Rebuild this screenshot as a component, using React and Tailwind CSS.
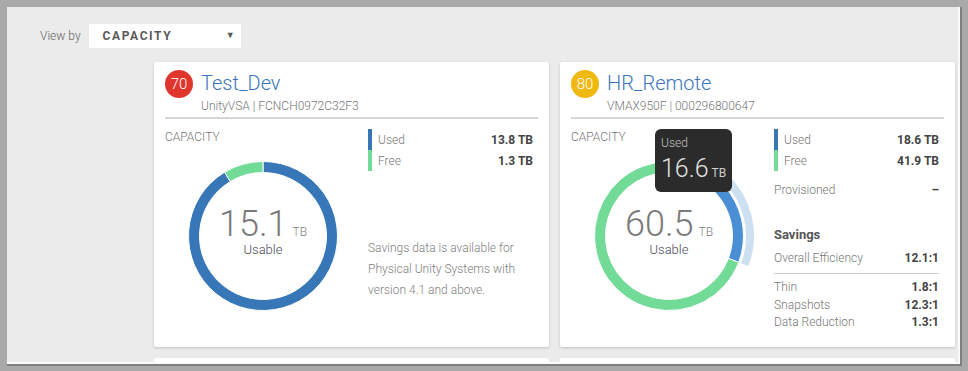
const BLUE = "#3777b8";
const GREEN = "#72db98";

function pt(c, r, a) {
  const rad = (a * Math.PI) / 180;
  return [c + r * Math.sin(rad), c - r * Math.cos(rad)];
}

function segPath(r0, r1, a0, a1) {
  const c = 90;
  const large = a1 - a0 > 180 ? 1 : 0;
  const [x0, y0] = pt(c, r1, a0);
  const [x1, y1] = pt(c, r1, a1);
  const [x2, y2] = pt(c, r0, a1);
  const [x3, y3] = pt(c, r0, a0);
  return `M${x0} ${y0} A${r1} ${r1} 0 ${large} 1 ${x1} ${y1} L${x2} ${y2} A${r0} ${r0} 0 ${large} 0 ${x3} ${y3} Z`;
}

function Donut({ segments, halo, value }) {
  return (
    <div className="relative w-[180px] h-[180px] ml-[8px] mt-[1px]">
      <svg width="180" height="180" viewBox="0 0 180 180">
        {halo && <path d={segPath(77, 85, halo[0], halo[1])} fill="#bcd5ee" opacity="0.75" />}
        {segments.map((s, i) => (
          <path key={i} d={segPath(63.5, 74.5, s.from, s.to)} fill={s.color} stroke="#fff" strokeWidth="1" />
        ))}
      </svg>
      <div className="absolute left-0 top-[64px] w-[180px] flex flex-col items-center">
        <div className="flex items-baseline h-[28px]">
          <span className="text-[36px] leading-[28px] font-light text-[#7a7a7a]">{value}</span>
          <span className="ml-[5px] text-[12px] leading-[12px] font-light text-[#808080]">TB</span>
        </div>
        <div className="mt-[4px] text-[13px] leading-[15px] font-light text-[#4a4b5e]">Usable</div>
      </div>
    </div>
  );
}

function Legend({ used, free }) {
  return (
    <div className="mt-[10px]">
      {[
        ["Used", used, BLUE],
        ["Free", free, GREEN],
      ].map(([label, val, color]) => (
        <div key={label} className="flex h-[21px] items-center">
          <div className="w-[4px] h-full" style={{ backgroundColor: color }} />
          <span className="ml-[6px] text-[12px] font-light text-[#777]">{label}</span>
          <span className="ml-auto text-[12px] font-bold text-[#444]">{val}</span>
        </div>
      ))}
    </div>
  );
}

function Row({ label, value }) {
  return (
    <div className="flex text-[12px] leading-[17.5px]">
      <span className="font-light text-[#777]">{label}</span>
      <span className="ml-auto font-bold text-[#444]">{value}</span>
    </div>
  );
}

function CardHeader({ score, color, name, sub }) {
  return (
    <>
      <div className="flex items-start gap-[8px]">
        <div
          className="w-[28px] h-[28px] rounded-full flex items-center justify-center text-white text-[15px] font-light"
          style={{ backgroundColor: color }}
        >
          {score}
        </div>
        <div className="pt-[1px]">
          <div className="text-[20px] leading-[24px] font-light text-[#3a74bd]">{name}</div>
          <div className="mt-[2px] text-[12px] leading-[18px] font-light text-[#777]">{sub}</div>
        </div>
      </div>
      <div className="mt-[2px] h-[2px] bg-[#d6d6d6]" />
    </>
  );
}

function Card({ children }) {
  return (
    <div className="relative w-[395px] h-[285px] bg-white rounded-[2px] shadow-[0_1px_3px_rgba(0,0,0,0.18)] px-[11px] pt-[8px]">
      {children}
    </div>
  );
}

export default function App() {
  return (
    <div className="w-[968px] h-[371px] bg-[#a9a9a9] pl-[7px] pt-[7px] pr-[6px] pb-[5px] font-['Roboto',sans-serif]">
      <div className="h-full border-r-[2px] border-b-[2px] border-[#7f7f7f]">
        <div className="h-full bg-[#ebebeb] border-r-[2px] border-b-[2px] border-[#fafafa] overflow-hidden">
          {/* View by */}
          <div className="flex items-center pt-[17px] pl-[33px]">
            <span className="text-[12px] font-light text-[#666]">View by</span>
            <div className="ml-[8px] w-[152px] h-[24px] bg-white flex items-center pl-[14px] pr-[6px]">
              <span className="text-[12px] font-bold tracking-[1.6px] text-[#5a5a5a]">CAPACITY</span>
              <span className="ml-auto text-[9px] text-[#555]">▼</span>
            </div>
          </div>

          {/* Cards */}
          <div className="pl-[147px] mt-[14px] flex gap-[11px]">
            <Card>
              <CardHeader score="70" color="#e0352d" name="Test_Dev" sub="UnityVSA | FCNCH0972C32F3" />
              <div className="flex">
                <div className="w-[203px]">
                  <div className="mt-[10px] text-[12px] leading-[16px] font-light text-[#777]">CAPACITY</div>
                  <Donut
                    value="15.1"
                    segments={[
                      { from: 0, to: 329, color: BLUE },
                      { from: 329, to: 360, color: GREEN },
                    ]}
                  />
                </div>
                <div className="w-[165px]">
                  <Legend used="13.8 TB" free="1.3 TB" />
                  <div className="mt-[67px] text-[12px] leading-[21px] font-light text-[#808080]">
                    Savings data is available for
                    <br />
                    Physical Unity Systems with
                    <br />
                    version 4.1 and above.
                  </div>
                </div>
              </div>
            </Card>

            <Card>
              <CardHeader score="80" color="#f0b912" name="HR_Remote" sub="VMAX950F | 000296800647" />
              <div className="flex">
                <div className="w-[203px]">
                  <div className="mt-[10px] text-[12px] leading-[16px] font-light text-[#777]">CAPACITY</div>
                  <Donut
                    value="60.5"
                    halo={[0, 110.7]}
                    segments={[
                      { from: 0, to: 110.7, color: "#4a8fd5" },
                      { from: 110.7, to: 360, color: GREEN },
                    ]}
                  />
                </div>
                <div className="w-[165px]">
                  <Legend used="18.6 TB" free="41.9 TB" />
                  <div className="mt-[10px] flex text-[12px] leading-[18px]">
                    <span className="font-light text-[#777]">Provisioned</span>
                    <span className="ml-auto font-bold text-[#444]">–</span>
                  </div>
                  <div className="mt-[27px] text-[13px] leading-[18px] font-bold text-[#555]">Savings</div>
                  <div className="mt-[5px] flex text-[12px] leading-[18px]">
                    <span className="font-light text-[#777]">Overall Efficiency</span>
                    <span className="ml-auto font-bold text-[#444]">12.1:1</span>
                  </div>
                  <div className="mt-[6px] h-[1px] bg-[#cfcfcf]" />
                  <div className="mt-[5px]">
                    <Row label="Thin" value="1.8:1" />
                    <Row label="Snapshots" value="12.3:1" />
                    <Row label="Data Reduction" value="1.3:1" />
                  </div>
                </div>
              </div>

              {/* tooltip */}
              <div className="absolute left-[95px] top-[67px] w-[77px] h-[63px] rounded-[6px] bg-[#2b2b2b] pl-[6px] pt-[7px]">
                <div className="text-[12px] leading-[14px] font-light text-[#c4c4c4]">Used</div>
                <div className="mt-[5px] flex items-baseline h-[28px]">
                  <span className="text-[25px] leading-[28px] font-light text-[#e2e2e2]">16.6</span>
                  <span className="ml-[3px] text-[12px] leading-[12px] text-[#cfcfcf]">TB</span>
                </div>
              </div>
            </Card>
          </div>

          <div className="pl-[147px] mt-[11px] flex gap-[11px]">
            <div className="w-[395px] h-[20px] bg-white rounded-[2px]" />
            <div className="w-[395px] h-[20px] bg-white rounded-[2px]" />
          </div>
        </div>
      </div>
    </div>
  );
}
